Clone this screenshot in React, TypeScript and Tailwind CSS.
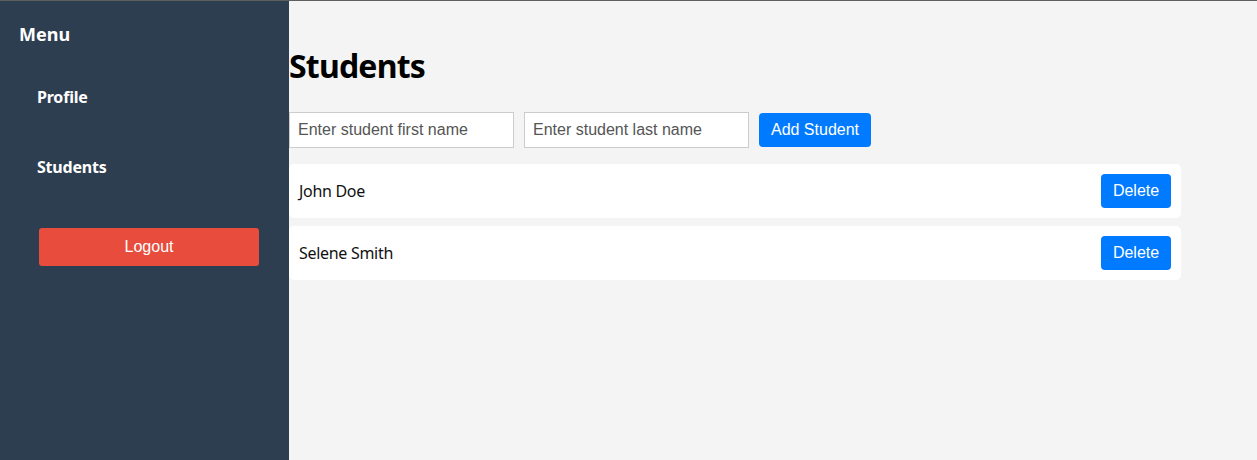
export default function App() {
  const students = ["John Doe", "Selene Smith"]
  return (
    <div className="flex h-[460px] w-full border-t border-[#5f5f5f] bg-[#f4f4f4] font-['Noto_Sans',sans-serif]">
      {/* Sidebar */}
      <aside className="w-[289px] shrink-0 bg-[#2c3e50] text-white">
        <div className="h-[67px] pl-[19px] pt-[21px] text-[18px] font-bold leading-[24px]">Menu</div>
        <ul>
          <li className="h-[70px] pl-[37px] pt-[17px] text-[16px] font-bold leading-[24px] tracking-[-0.2px]">Profile</li>
          <li className="h-[70px] pl-[37px] pt-[17px] text-[16px] font-bold leading-[24px] tracking-[-0.2px]">Students</li>
        </ul>
        <div className="pl-[39px] pt-[20px]">
          <button className="h-[38px] w-[220px] rounded-[3px] bg-[#e74c3c] font-['Liberation_Sans',sans-serif] text-[16px] text-white">
            Logout
          </button>
        </div>
      </aside>

      {/* Main */}
      <main className="flex-1">
        <h1 className="mt-[45px] h-[40px] text-[32px] font-bold leading-[40px] tracking-[-0.8px] text-black">Students</h1>
        <div className="mt-[26px] flex items-center gap-[10px]">
          <input
            className="h-[36px] w-[225px] border border-[#cccccc] bg-white px-[8px] font-['Liberation_Sans',sans-serif] text-[16px] placeholder:text-[#555]"
            placeholder="Enter student first name"
          />
          <input
            className="h-[36px] w-[225px] border border-[#cccccc] bg-white px-[8px] font-['Liberation_Sans',sans-serif] text-[16px] placeholder:text-[#555]"
            placeholder="Enter student last name"
          />
          <button className="h-[34px] w-[112px] rounded-[4px] bg-[#007bff] font-['Liberation_Sans',sans-serif] text-[16px] text-white">
            Add Student
          </button>
        </div>
        <div className="mt-[16px] flex w-[892px] flex-col gap-[8px]">
          {students.map((s) => (
            <div key={s} className="flex h-[54px] items-center justify-between rounded-[5px] bg-white px-[10px]">
              <span className="text-[16px] tracking-[-0.3px] text-[#111]">{s}</span>
              <button className="h-[34px] w-[70px] rounded-[4px] bg-[#007bff] font-['Liberation_Sans',sans-serif] text-[16px] text-white">
                Delete
              </button>
            </div>
          ))}
        </div>
      </main>
    </div>
  )
}
